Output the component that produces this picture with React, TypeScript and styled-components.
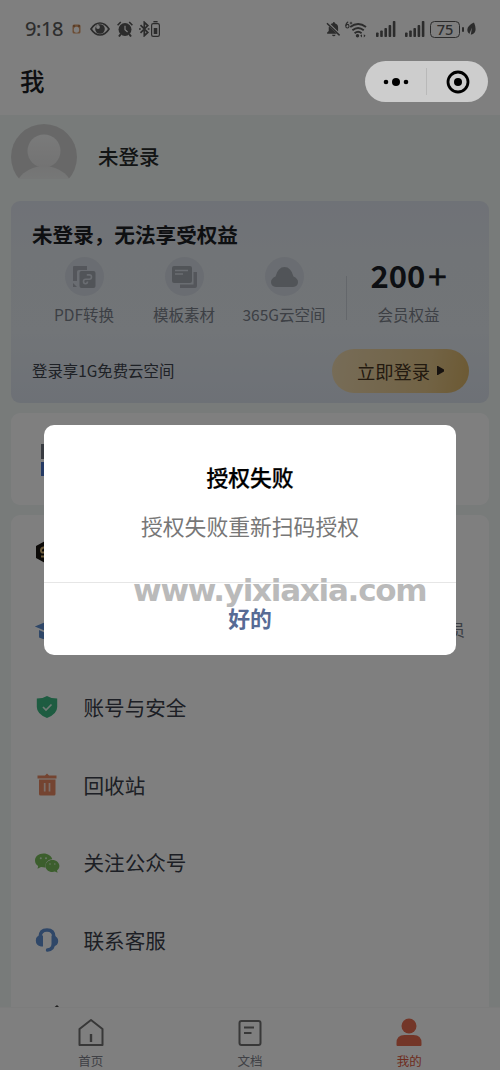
import React from 'react';
import styled, { createGlobalStyle } from 'styled-components';

const Global = createGlobalStyle`
  * { box-sizing: border-box; }
  body { margin: 0; background: #808080; font-family: "Noto Sans CJK SC", sans-serif; }
  svg { display: block; flex: none; }
`;

const Screen = styled.div`
  position: relative; width: 500px; height: 1070px; overflow: hidden;
  display: flex; flex-direction: column; background: #f1f6f4;
`;
const Header = styled.header`height: 115px; flex: none; background: #fff;`;
const StatusBar = styled.div`
  height: 58px; padding: 0 24px 0 25px; display: flex; align-items: center; justify-content: space-between; color: #585858;
`;
const StatusGroup = styled.div`display: flex; align-items: center;`;
const Spaced = styled.span<{ $l: number }>`display: block; margin-left: ${p => p.$l}px;`;
const Time = styled.span`
  width: 38px; font: 400 20px/24px "Noto Sans", sans-serif; letter-spacing: -0.4px; white-space: nowrap;
  -webkit-text-stroke: 0.2px currentColor;
`;
const PageTitle = styled.h1`margin: 5px 0 0 20px; font-size: 24.5px; line-height: 36px; font-weight: 500; color: #1c1f24;`;
const Content = styled.main`flex: 1; min-height: 0; overflow: hidden; padding: 0 11px; display: flex; flex-direction: column;`;
const Profile = styled.section`height: 86px; flex: none; padding-top: 9px; display: flex; gap: 21px;`;
const Name = styled.div`font-size: 20.5px; line-height: 64px; font-weight: 500; color: #262a2a;`;

const VipCard = styled.section`
  height: 202px; flex: none; border-radius: 9px; padding: 17px 21px 0;
  background: linear-gradient(180deg, #dfe4ee 0%, #e3e9ee 30%, #e4eaf0 65%, #dbe2ed 100%);
`;
const VipTitle = styled.h2`margin: 0; font-size: 20.6px; line-height: 32px; font-weight: 700; color: #1c2024;`;
const Perks = styled.div`display: flex; margin: 6px 0 0 2px;`;
const Perk = styled.div`width: 100px; display: flex; flex-direction: column; align-items: center;`;
const PerkIcon = styled.div`
  width: 39px; height: 39px; margin-top: 1px; border-radius: 50%; background: #d5dbe4;
  display: flex; align-items: center; justify-content: center;
`;
const PerkLabel = styled.div`margin-top: 6px; font-size: 15.5px; line-height: 24px; white-space: nowrap; color: #7a808a;`;
const Divider = styled.div`width: 1px; height: 44px; margin: 20px 0 0 12px; background: #c8ced6;`;
const Total = styled.div`flex: 1; display: flex; flex-direction: column; align-items: center; margin-right: -2px;`;
const Count = styled.div`
  height: 40px; display: flex; align-items: center; color: #1a1e26; font-weight: 700; font-size: 31px; line-height: 38px;
`;
const Digits = styled.span`letter-spacing: -0.1px; margin-top: -2px;`;
const Plus = styled.span`font-size: 33px; font-weight: 400; margin: -2px 0 0 3px; -webkit-text-stroke: 0.6px currentColor;`;
const VipFooter = styled.div`display: flex; align-items: center; justify-content: space-between; margin-top: 23px;`;
const FooterText = styled.div`font-size: 15.4px; line-height: 22px; margin-top: -2px; color: #3d434c; white-space: nowrap;`;
const LoginButton = styled.button`
  width: 137px; height: 44px; margin-right: -1px; border: 0; border-radius: 22px; padding: 0 0 1px;
  display: flex; align-items: center; justify-content: center; gap: 7px;
  font: 400 18.3px "Noto Sans CJK SC", sans-serif; color: #47341f;
  background: linear-gradient(100deg, #eed9b0, #e4c68a 70%, #d9b366);
`;

const Panel = styled.section<{ $h?: number }>`
  flex: none; margin-top: 10px; border-radius: 9px; background: #fff; ${p => p.$h ? `height: ${p.$h}px;` : ''}
  overflow: hidden;
`;
const AppIcon = styled.div`padding: 31px 0 0 30px;`;
const Row = styled.div`height: 77.6px; display: flex; align-items: center; padding: 0 24px 3px 23px;`;
const RowIcon = styled.div`width: 26px; height: 26px; margin-right: 23.500px;`;
const RowLabel = styled.span`font-size: 20.6px; line-height: 30px; margin-top: -1px; color: #3a3e4a;`;
const RowNote = styled.span`margin-left: auto; font-size: 16px; line-height: 24px; margin-top: -1px; color: #777d89;`;

const TabBar = styled.nav`height: 63px; flex: none; background: #fff; border-top: 1px solid #f8f8f8; padding: 0 11px; display: flex;`;
const Tab = styled.div<{ $active?: boolean }>`
  flex: 1; display: flex; flex-direction: column; align-items: center; padding-top: 9px;
  font-size: 12.5px; line-height: 20px; color: ${p => (p.$active ? '#dc5a40' : '#80828c')};
`;
const TabText = styled.span`margin-top: 2px;`;

const Mask = styled.div`
  position: absolute; inset: 0; background: rgba(0, 0, 0, 0.5);
  display: flex; justify-content: center; align-items: flex-start; padding-top: 425px;
`;
const Dialog = styled.div`
  position: relative; width: 412px; height: 230px; border-radius: 10px; background: #fff; text-align: center;
  display: flex; flex-direction: column;
`;
const DialogTitle = styled.div`margin-top: 35px; font-size: 21.8px; line-height: 34px; font-weight: 500; color: #000; -webkit-text-stroke: 0.25px #000;`;
const DialogText = styled.div`margin-top: 15px; font-size: 21.8px; line-height: 34px; color: #777;`;
const DialogAction = styled.div`
  margin-top: auto; height: 73px; border-top: 1px solid #e6e6e6; line-height: 70px; font-size: 21.8px; font-weight: 700; color: #576b95;
`;
const Watermark = styled.div`
  position: absolute; left: 89px; top: 146px; white-space: nowrap; color: #8d8d8d; opacity: 0.6;
  font: 700 31px/38px "DejaVu Sans", sans-serif; letter-spacing: -1.25px;
`;
const Capsule = styled.div`
  position: absolute; left: 365px; top: 61px; width: 123px; height: 41px; border-radius: 21px; background: #cdcdcd;
  display: flex; align-items: center;
`;
const CapsuleHalf = styled.div`flex: 1; display: flex; justify-content: center;`;
const CapsuleLine = styled.div`width: 1px; height: 27px; background: #b9b9b9;`;

const Signal = () => (
  <svg width="20" height="16" viewBox="0 0 20 16" fill="currentColor">
    <rect x="0" y="11.5" width="2.6" height="4.5" rx=".8" /><rect x="4.2" y="9.5" width="2.6" height="6.5" rx=".8" />
    <rect x="8.4" y="7" width="2.6" height="9" rx=".8" /><rect x="12.6" y="4" width="2.6" height="12" rx=".8" />
    <rect x="16.8" y="0" width="2.6" height="16" rx=".8" />
  </svg>
);

const BatteryLevel = styled.span`
  width: 30px; height: 17px; border: 1.5px solid currentColor; border-radius: 4.5px; display: block;
  font: 500 14.5px/14px "Noto Sans", sans-serif; text-align: center;
`;
const BatteryTip = styled.span`width: 2px; height: 5px; border-radius: 1px; background: currentColor; margin-left: 2px;`;

const Status = () => (
  <StatusBar>
    <StatusGroup>
      <Time>9:18</Time>
      <Spaced $l={9}>
        <svg width="9" height="10" viewBox="0 0 9 10"><rect x=".5" y=".5" width="8" height="9" rx="1.500" fill="#d99a68" /><path d="M2 1v2M7 1v2" stroke="#8a5a38" /><ellipse cx="4.500" cy="5.800" rx="2.700" ry="3" fill="#fff" /></svg>
      </Spaced>
      <Spaced $l={9}>
        <svg width="20" height="14" viewBox="0 0 20 14"><path d="M1 7Q4.800 1 10 1t9 6q-3.800 6-9 6T1 7Z" fill="none" stroke="currentColor" strokeWidth="1.700" /><circle cx="10" cy="7" r="4.800" fill="currentColor" /><circle cx="8" cy="5" r="1.900" fill="#fff" /></svg>
      </Spaced>
      <Spaced $l={7}>
        <svg width="16" height="16" viewBox="0 0 16 16" fill="none" stroke="currentColor"><circle cx="8" cy="8.500" r="6.500" fill="currentColor" stroke="none" /><path d="M.6 4.200 3.800 1M15.400 4.200 12.200 1" strokeWidth="1.600" /><path d="M3.800 13 2 15.500M12.200 13l1.800 2.500" strokeWidth="2" /><path d="M8 4.800v4l2.600 2.200" stroke="#fff" strokeWidth="1.200" /></svg>
      </Spaced>
      <Spaced $l={6}>
        <svg width="11" height="16" viewBox="0 0 11 16" fill="none" stroke="currentColor" strokeWidth="1.700"><path d="M1.500 4.200 8.800 11.500 5.300 14.700V1.300l3.500 3.200L1.500 11.800" /><path d="M0 8h1.800M8.700 8h1.800" /></svg>
      </Spaced>
      <Spaced $l={1}>
        <svg width="9" height="16" viewBox="0 0 9 16" fill="none" stroke="currentColor" strokeWidth="1.200"><rect x=".6" y="2.600" width="7.800" height="12.800" rx="1.600" /><path d="M2.400.7h4.200" strokeWidth="1.400" /><path d="M2.700 7h3.600v6H2.700z" fill="currentColor" stroke="none" /></svg>
      </Spaced>
    </StatusGroup>
    <StatusGroup>
      <svg width="15" height="16" viewBox="0 0 16 16" fill="currentColor"><path d="M3.200 5.200 11.500 13H1.200v-1.400l1.700-1.400V6.500ZM5 2.900Q6 2 7.300 1.800 7.400.5 8.400.5t1.100 1.300q3.400 1 3.400 4.700v4.100Z" /><path d="M6.300 14h4q-.5 1.600-2 1.600T6.300 14Z" /><path d="m1 1.800 13.500 13" stroke="currentColor" strokeWidth="1.600" /></svg>
      <Spaced $l={4}>
        <svg width="22" height="17" viewBox="0 0 22 17" fill="none" stroke="currentColor" strokeWidth="1.900"><path d="M3.200.8Q.8 2 .8 5" strokeWidth="1.100" /><ellipse cx="2.400" cy="5.200" rx="1.600" ry="1.800" strokeWidth="1.100" /><path d="M6 .8v2.600M4.700 2.100h2.600" strokeWidth=".9" /><path d="M5.200 6q8-6 15.800 0M7.400 9.200q5.600-4.600 11.400 0M9.600 12.200q3.500-2.900 7 0" /><circle cx="12.500" cy="14.800" r="1.700" fill="currentColor" stroke="none" /><path d="m17 13.200-1.800 1.600 1.800 1.600ZM18.800 13.200l1.800 1.600-1.800 1.600Z" fill="currentColor" stroke="none" /></svg>
      </Spaced>
      <Spaced $l={9}><Signal /></Spaced>
      <Spaced $l={9}><Signal /></Spaced>
      <Spaced $l={5}><BatteryLevel>75</BatteryLevel></Spaced>
      <BatteryTip />
      <Spaced $l={3}>
        <svg width="9" height="14" viewBox="0 0 9 14" fill="currentColor"><path d="M7 .5Q.3 3.500.3 8q0 2.800 2 4L5 5.500 3.800 12.800Q8.800 11.500 8.600 7 8.400 3.500 7 .5Z" /></svg>
      </Spaced>
    </StatusGroup>
  </StatusBar>
);

const Avatar = () => (
  <svg width="66" height="66" viewBox="0 0 66 66">
    <defs>
      <linearGradient id="head" x2="0" y2="1"><stop stopColor="#f4f5f5" /><stop offset="1" stopColor="#e6e6e6" /></linearGradient>
      <linearGradient id="body" x2="0" y2="1"><stop stopColor="#e8e8e8" /><stop offset=".5" stopColor="#f1f6f4" /></linearGradient>
      <clipPath id="disc"><path d="M0 0h66v55H0z" /></clipPath>
    </defs>
    <g clipPath="url(#disc)"><circle cx="33" cy="33" r="33" fill="#d0d1d1" /><ellipse cx="33" cy="67" rx="29" ry="25" fill="url(#body)" /></g>
    <circle cx="33" cy="27" r="16.500" fill="url(#head)" />
  </svg>
);

const shield = <svg width="26" height="26" viewBox="0 0 26 26"><path d="M13 2Q17 4.500 23.200 4.500V13q0 7-10.200 11Q2.800 20 2.800 13V4.500Q9 4.500 13 2Z" fill="#3cb883" /><path d="m9 13 3 3 5.500-5.500" fill="none" stroke="#e4f5ec" strokeWidth="1.700" /></svg>;
const trash = <svg width="26" height="26" viewBox="0 0 26 26"><path d="M3.500 3.500H11L13 1.500l2 2h7.500V6.500h-19ZM5 7.500h16.500V22q0 1.500-1.500 1.500H6.500Q5 23.500 5 22Z" fill="#e88962" /><path d="M10.700 11v8.500M15.500 11v8.500" stroke="#f8dfd5" strokeWidth="1.700" /></svg>;
const wechat = <svg width="26" height="26" viewBox="0 0 26 26"><path d="M9.500 3.500C4.500 3.500 1 6.700 1 10.500c0 2.400 1.200 4.200 3.200 5.500L3.500 18.800 7 17.100q4.500.8 4.500.1c-.8-5 3-8 6.800-8C17.500 6 14 3.500 9.500 3.500Z" fill="#78bd5b" /><path d="M18.400 10c-4 0-7 2.700-7 6s3 6 7 6q1.400 0 2.500-.4l2.700 1.100-.6-2.200c1.500-1.100 2.400-2.600 2.400-4.500 0-3.300-3-6-7-6Z" fill="#78bd5b" /><g fill="#d5edcd"><circle cx="6.800" cy="8.300" r="1" /><circle cx="12" cy="8.300" r="1" /><circle cx="16" cy="14" r=".8" /><circle cx="20.800" cy="14" r=".8" /></g></svg>;
const headset = <svg width="26" height="26" viewBox="0 0 26 26"><path d="M6 13V10.500q0-7.500 7-7.500t7 7.500V14q0 8.500-6.500 9" fill="none" stroke="#5f8fd0" strokeWidth="3.400" strokeLinecap="round" /><path d="M9 8.500v11H7Q1.800 18.500 1.800 13.500T7 8.500ZM17.500 8.500v11h1.700q5-1 5-5.500t-5-5.500Z" fill="#5f8fd0" /></svg>;
const member = <svg width="26" height="26" viewBox="0 0 26 26"><path d="m13 1 11 6v12l-11 6-11-6V7Z" fill="#181410" /><path d="M16 8.500H9.500Q7 9 7 11.500t2.500 2H16v4H7" fill="none" stroke="#d8b778" strokeWidth="2" /></svg>;
const cap = <svg width="26" height="26" viewBox="0 0 26 26"><path d="m.8 9.500 12-5 12 5-12 5Z" fill="#5f8fd0" /><path d="M5 13v7.500q8 4 16 0V13l-8.200 3.500Z" fill="#5f8fd0" /></svg>;
const pen = <svg width="26" height="26" viewBox="0 0 26 26"><path d="M23 0 26 3 8 22H3v-5Z" fill="#444" /></svg>;

const rows: { icon: React.ReactNode; label?: string; note?: string }[] = [
  { icon: member },
  { icon: cap, note: '员' },
  { icon: shield, label: '账号与安全' },
  { icon: trash, label: '回收站' },
  { icon: wechat, label: '关注公众号' },
  { icon: headset, label: '联系客服' },
  { icon: pen },
];

export default function App() {
  return (
    <Screen>
      <Global />
      <Header>
        <Status />
        <PageTitle>我</PageTitle>
      </Header>
      <Content>
        <Profile><Avatar /><Name>未登录</Name></Profile>
        <VipCard>
          <VipTitle>未登录，无法享受权益</VipTitle>
          <Perks>
            <Perk>
              <PerkIcon><svg width="24" height="22" viewBox="0 0 24 22"><path d="M2 0h13v4H7q-2 0-2 2v9H1V1q0-1 1-1ZM1 17l4 4H1Z" fill="#a8adb6" /><rect x="7.500" y="5" width="16" height="17" rx="2" fill="#a2a8b0" /><path d="M11.500 15.500q0-2.200 2.200-2.200h3.600q2.200 0 2.200-2.200t-2.200-2.200h-2.500M11.500 15.500q0 2.200 2 2.200t2-2.200" fill="none" stroke="#d5dbe4" strokeWidth="1.600" /></svg></PerkIcon>
              <PerkLabel>PDF转换</PerkLabel>
            </Perk>
            <Perk>
              <PerkIcon><svg width="25" height="22" viewBox="0 0 25 22"><path d="M21.500 6H25v14q0 2-2 2H8v-3.500h13.500Z" fill="#a8adb6" /><rect x="0" y="0" width="20" height="17" rx="2" fill="#a2a8b0" /><path d="M3 4.500h13M3 8h8" stroke="#d5dbe4" strokeWidth="1.400" /></svg></PerkIcon>
              <PerkLabel>模板素材</PerkLabel>
            </Perk>
            <Perk>
              <PerkIcon><svg width="27" height="20" viewBox="0 0 27 20"><path d="M5 20Q0 19.500 0 15q0-3.500 4.500-5.500Q7 0 13.500 0t9 9.500Q27 11.500 27 15q0 4.500-5 5Z" fill="#a2a8b0" /></svg></PerkIcon>
              <PerkLabel>365G云空间</PerkLabel>
            </Perk>
            <Divider />
            <Total>
              <Count><Digits>200</Digits><Plus>+</Plus></Count>
              <PerkLabel>会员权益</PerkLabel>
            </Total>
          </Perks>
          <VipFooter>
            <FooterText>登录享1G免费云空间</FooterText>
            <LoginButton>立即登录<svg width="7" height="9" viewBox="0 0 7 9"><path d="M0 0h1l6 3.500v2L1 9H0Z" fill="#2e251f" /></svg></LoginButton>
          </VipFooter>
        </VipCard>
        <Panel $h={92}>
          <AppIcon><svg width="30" height="32" viewBox="0 0 30 32"><rect width="14" height="15" fill="#707682" /><rect y="18" width="14" height="14" fill="#4a74c8" /></svg></AppIcon>
        </Panel>
        <Panel>
          {rows.map((r, i) => (
            <Row key={i}>
              <RowIcon>{r.icon}</RowIcon>
              {r.label && <RowLabel>{r.label}</RowLabel>}
              {r.note && <RowNote>{r.note}</RowNote>}
            </Row>
          ))}
        </Panel>
      </Content>
      <TabBar>
        <Tab><svg width="26" height="32" viewBox="0 0 26 32" fill="none" stroke="#707070" strokeWidth="2"><path d="M1.500 12 13 3l11.500 9V28h-23Z" strokeLinejoin="round" /><path d="M13 17v8" strokeWidth="2.400" /></svg><TabText>首页</TabText></Tab>
        <Tab><svg width="24" height="32" viewBox="0 0 24 32" fill="none" stroke="#707070" strokeWidth="2"><rect x="1.500" y="4" width="21" height="24" rx="2" /><path d="M6 10.500h10M6 16h7.500" /></svg><TabText>文档</TabText></Tab>
        <Tab $active><svg width="26" height="32" viewBox="0 0 26 32" fill="#e66c50"><circle cx="13" cy="9" r="7.500" /><path d="M.5 28V26q0-8 8-8h9q8 0 8 8v2q0 1-1 1h-23q-1 0-1-1Z" /></svg><TabText>我的</TabText></Tab>
      </TabBar>
      <Mask>
        <Dialog>
          <DialogTitle>授权失败</DialogTitle>
          <DialogText>授权失败重新扫码授权</DialogText>
          <DialogAction>好的</DialogAction>
          <Watermark>www.yixiaxia.com</Watermark>
        </Dialog>
      </Mask>
      <Capsule>
        <CapsuleHalf><svg width="26" height="10" viewBox="0 0 26 10"><circle cx="3" cy="5" r="2.300" /><circle cx="13" cy="5" r="4" /><circle cx="23" cy="5" r="2.300" /></svg></CapsuleHalf>
        <CapsuleLine />
        <CapsuleHalf><svg width="24" height="24" viewBox="0 0 24 24"><circle cx="12" cy="12" r="10" fill="none" stroke="#000" strokeWidth="2.800" /><circle cx="12" cy="12" r="4" /></svg></CapsuleHalf>
      </Capsule>
    </Screen>
  );
}
